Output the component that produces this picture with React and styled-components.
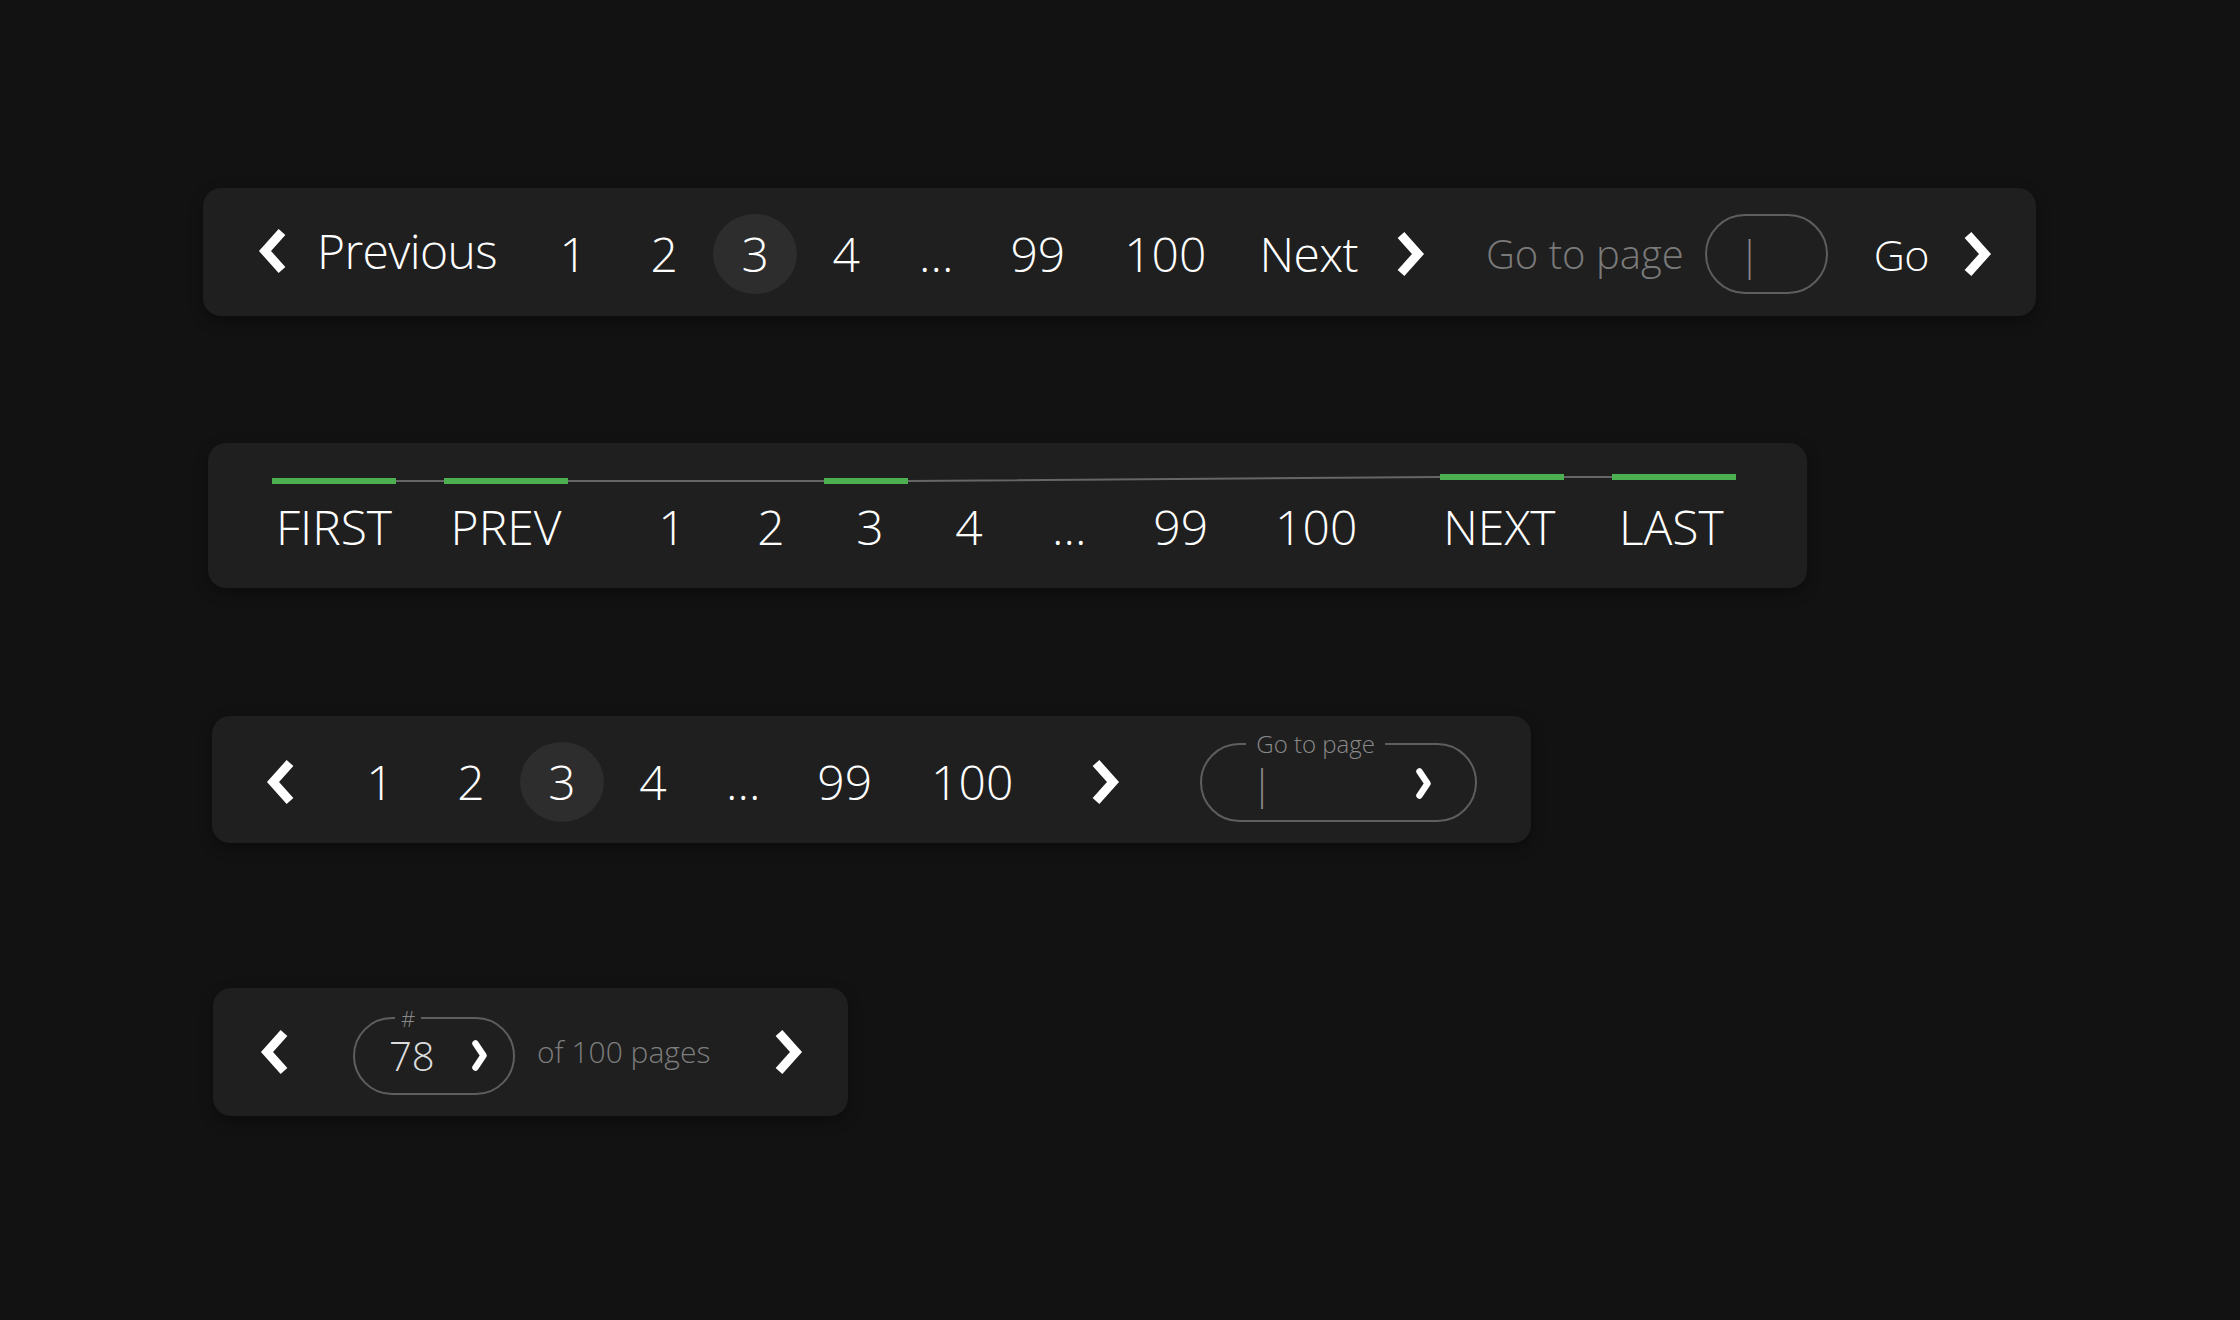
import React from 'react'
import styled, { createGlobalStyle } from 'styled-components'

const GlobalStyle = createGlobalStyle`
    html, body {
        margin: 0;
        background: #121212;
    }
    body {
        font-family: "Open Sans", "Noto Sans", sans-serif;
        font-weight: 300;
        color: #fff;
    }
    * {
        box-sizing: border-box;
    }
`

const Page = styled.main`
    min-height: 1320px;
    padding: 188px 0 0 203px;
    display: flex;
    flex-direction: column;
    align-items: flex-start;
`

const Panel = styled.nav`
    display: flex;
    align-items: center;
    height: ${(p) => p.$height || 128}px;
    margin: ${(p) => p.$top || 0}px 0 0 ${(p) => p.$left || 0}px;
    padding: ${(p) => p.$padTop || 0}px ${(p) => p.$padRight || 0}px 0 ${(p) => p.$padLeft || 0}px;
    background: #1f1f1f;
    border-radius: 18px;
    box-shadow: 0 5px 14px rgba(0, 0, 0, 0.35);
`

const TrackPanel = styled(Panel)`
    flex-direction: column;
    align-items: flex-start;
    padding-top: 29px;
`

const BareButton = styled.button`
    display: flex;
    align-items: center;
    background: none;
    border: 0;
    padding: 0;
    margin: 0;
    color: inherit;
    font: inherit;
    line-height: 1;
    cursor: pointer;
`

const NavButton = styled(BareButton)`
    gap: ${(p) => p.$gap}px;
    font-size: ${(p) => p.$size || 48}px;
    letter-spacing: -0.6px;
    margin-left: ${(p) => p.$ml || 0}px;
    transform: translateY(${(p) => p.$raise || 0}px);
`

const PageList = styled.ul`
    display: flex;
    align-items: center;
    gap: ${(p) => p.$gap}px;
    list-style: none;
    margin: 0 0 0 ${(p) => p.$ml || 0}px;
    padding: 0;
`

const PageButton = styled(BareButton)`
    justify-content: center;
    height: 80px;
    min-width: 84px;
    padding: 0 26px;
    font-size: 48px;
    border-radius: 50%;
    background: ${(p) => (p.$active ? '#2d2d2d' : 'transparent')};
`

const Ellipsis = styled.span`
    display: block;
    padding: 0 24px;
    font-size: 48px;
    line-height: 1;
`

const GoLabel = styled.span`
    margin-left: ${(p) => p.$ml || 0}px;
    font-size: 40px;
    line-height: 1;
    color: #7a7a7a;
`

const InputPill = styled.label`
    display: flex;
    align-items: center;
    width: 123px;
    height: 80px;
    margin-left: ${(p) => p.$ml || 0}px;
    padding-left: 32px;
    border: 2px solid #5e5e5e;
    border-radius: 40px;
`

const PageInput = styled.input`
    width: ${(p) => (p.$width ? `${p.$width}px` : 'auto')};
    flex: ${(p) => (p.$width ? 'none' : '1')};
    min-width: 0;
    height: ${(p) => p.$height || 60}px;
    padding: 0 0 0 ${(p) => p.$indent || 0}px;
    border: 0;
    outline: none;
    background: transparent;
    font-family: inherit;
    font-weight: 300;
    font-size: 40px;
    color: #dcdcdc;
    &::placeholder {
        color: #8a8a8a;
    }
`

const FieldPill = styled.fieldset`
    display: flex;
    align-items: center;
    width: ${(p) => p.$width}px;
    min-inline-size: 0;
    margin: ${(p) => p.$mt || 0}px 0 0 ${(p) => p.$ml || 0}px;
    padding: 0 ${(p) => p.$padRight}px 10px ${(p) => p.$padLeft}px;
    border: 2px solid #5e5e5e;
    border-radius: 40px;
`

const Legend = styled.legend`
    margin-left: ${(p) => p.$offset || 0}px;
    padding: 0 ${(p) => p.$pad}px;
    font-size: ${(p) => p.$size}px;
    line-height: 1;
    color: #8a8a8a;
`

const PagesText = styled.span`
    margin-left: 22px;
    font-size: 30px;
    line-height: 1;
    color: #7d7d7d;
`

const SubmitButton = styled(BareButton)`
    margin-left: auto;
`

const IconButton = styled(BareButton)`
    margin-left: ${(p) => p.$ml || 0}px;
`

const TrackSvg = styled.svg`
    display: block;
`

const TabRow = styled.div`
    display: flex;
    align-items: center;
    margin-top: 19px;
`

const TabGroup = styled.div`
    display: flex;
    gap: ${(p) => p.$gap || 48}px;
    margin-left: ${(p) => p.$ml || 0}px;
`

const Tab = styled(BareButton)`
    justify-content: center;
    width: ${(p) => (p.$wide ? '124px' : 'auto')};
    min-width: 84px;
    padding: ${(p) => (p.$wide ? '0' : '0 26px')};
    font-size: 48px;
`

const ChevronSvg = styled.svg`
    display: block;
    flex: none;
`

const Chevron = ({ dir = 'left' }) => (
    <ChevronSvg width="30" height="44" viewBox="0 0 30 44">
        <polyline
            points={dir === 'left' ? '25,3 8,22 25,41' : '5,3 22,22 5,41'}
            fill="none"
            stroke="#fff"
            strokeWidth="9"
            strokeLinejoin="miter"
        />
    </ChevronSvg>
)

const SmallChevron = () => (
    <ChevronSvg width="15" height="31" viewBox="0 0 15 31">
        <polyline
            points="3.5,3.5 11.5,15.5 3.5,27.5"
            fill="none"
            stroke="#fff"
            strokeWidth="6.5"
            strokeLinecap="round"
            strokeLinejoin="round"
        />
    </ChevronSvg>
)

const pages = ['1', '2', '3', '4', '...', '99', '100']

const Pages = ({ gap, ml, current }) => (
    <PageList $gap={gap} $ml={ml}>
        {pages.map((page) => (
            <li key={page}>
                {page === '...' ? (
                    <Ellipsis>...</Ellipsis>
                ) : (
                    <PageButton $active={page === current}>{page}</PageButton>
                )}
            </li>
        ))}
    </PageList>
)

// green marks sit above the lit tabs, the grey line bends slightly up towards NEXT
const segments = [
    { x: 0, y: 6, w: 124 },
    { x: 172, y: 6, w: 124 },
    { x: 552, y: 6, w: 84 },
    { x: 1168, y: 2, w: 124 },
    { x: 1340, y: 2, w: 124 },
]

const Track = () => (
    <TrackSvg width="1464" height="12" viewBox="0 0 1464 12">
        <polyline points="0,9 636,9 1168,5 1464,5" fill="none" stroke="#666" strokeWidth="2" />
        {segments.map((s) => (
            <rect key={s.x} x={s.x} y={s.y} width={s.w} height="6" fill="#4caf50" />
        ))}
    </TrackSvg>
)

export default function App() {
    return (
        <>
            <GlobalStyle />
            <Page>
                <Panel $padLeft={54} $padRight={43} $padTop={4}>
                    <NavButton $gap={30} $raise={-3}>
                        <Chevron dir="left" />
                        Previous
                    </NavButton>
                    <Pages gap={7} ml={34} current="3" />
                    <NavButton $gap={38} $ml={27}>
                        Next
                        <Chevron dir="right" />
                    </NavButton>
                    <GoLabel $ml={60}>Go to page</GoLabel>
                    <InputPill $ml={21}>
                        <PageInput placeholder="|" />
                    </InputPill>
                    <NavButton $gap={34} $ml={46} $size={43}>
                        Go
                        <Chevron dir="right" />
                    </NavButton>
                </Panel>

                <TrackPanel $top={127} $left={5} $height={145} $padLeft={64} $padRight={71}>
                    <Track />
                    <TabRow>
                        <TabGroup>
                            <Tab $wide>FIRST</Tab>
                            <Tab $wide>PREV</Tab>
                        </TabGroup>
                        <TabGroup $ml={62} $gap={15}>
                            {pages.map((page) => (
                                <Tab key={page}>{page}</Tab>
                            ))}
                        </TabGroup>
                        <TabGroup $ml={54}>
                            <Tab $wide>NEXT</Tab>
                            <Tab $wide>LAST</Tab>
                        </TabGroup>
                    </TabRow>
                </TrackPanel>

                <Panel $top={128} $left={9} $height={127} $padLeft={53} $padRight={54} $padTop={4}>
                    <IconButton>
                        <Chevron dir="left" />
                    </IconButton>
                    <Pages gap={7} ml={43} current="3" />
                    <IconButton $ml={52}>
                        <Chevron dir="right" />
                    </IconButton>
                    <FieldPill $width={277} $ml={79} $mt={-9} $padLeft={44} $padRight={44}>
                        <Legend $pad={10} $size={24}>Go to page</Legend>
                        <PageInput placeholder="|" $height={54} $indent={5} />
                        <SubmitButton>
                            <SmallChevron />
                        </SubmitButton>
                    </FieldPill>
                </Panel>

                <Panel $top={145} $left={10} $height={128} $padLeft={46} $padRight={44}>
                    <IconButton>
                        <Chevron dir="left" />
                    </IconButton>
                    <FieldPill $width={162} $ml={64} $mt={-3} $padLeft={34} $padRight={26}>
                        <Legend $pad={6} $offset={6} $size={22}>#</Legend>
                        <PageInput defaultValue="78" $width={50} $height={54} />
                        <SubmitButton>
                            <SmallChevron />
                        </SubmitButton>
                    </FieldPill>
                    <PagesText>of 100 pages</PagesText>
                    <IconButton $ml={64}>
                        <Chevron dir="right" />
                    </IconButton>
                </Panel>
            </Page>
        </>
    )
}
